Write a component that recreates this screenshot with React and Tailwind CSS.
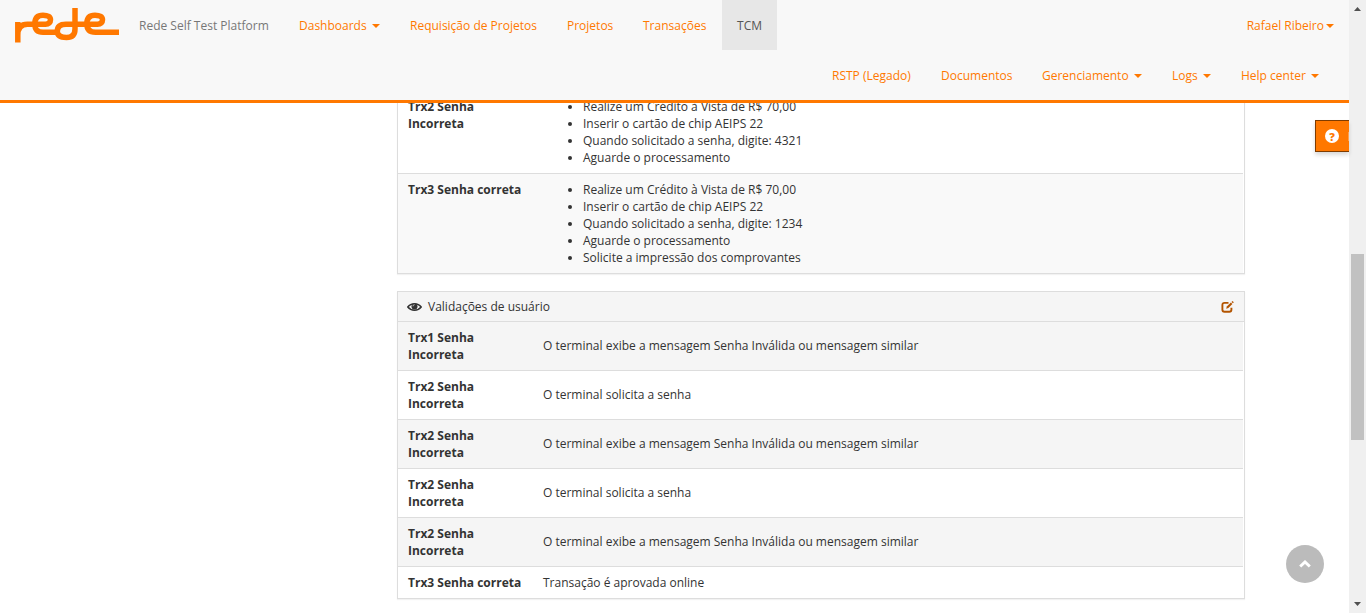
import React from "react";

const NAV_LEFT = [
  { label: "Dashboards", caret: true, width: "w-[111px]" },
  { label: "Requisição de Projetos", width: "w-[157px]" },
  { label: "Projetos", width: "w-[76px]" },
  { label: "Transações", width: "w-[94px]" },
];

const NAV_SECOND = [
  { label: "RSTP (Legado)", width: "w-[109px]" },
  { label: "Documentos", width: "w-[101px]" },
  { label: "Gerenciamento", caret: true, width: "w-[130px]" },
  { label: "Logs", caret: true, width: "w-[69px]" },
  { label: "Help center", caret: true, width: "w-[108px]" },
];

const STEPS = [
  "Realize um Crédito à Vista de R$ 70,00",
  "Inserir o cartão de chip AEIPS 22",
];

const INVALID = "O terminal exibe a mensagem Senha Inválida ou mensagem similar";
const ASK = "O terminal solicita a senha";

const VALIDATIONS = [
  ["Trx1 Senha Incorreta", INVALID],
  ["Trx2 Senha Incorreta", ASK],
  ["Trx2 Senha Incorreta", INVALID],
  ["Trx2 Senha Incorreta", ASK],
  ["Trx2 Senha Incorreta", INVALID],
];

function Caret({ className = "" }) {
  return (
    <svg viewBox="0 0 8 4" className={`inline-block h-1 w-2 shrink-0 ${className}`} fill="currentColor">
      <path d="M0 0H8L4 4Z" />
    </svg>
  );
}

function NavItem({ label, caret, width }) {
  return (
    <a className={`flex h-[50px] shrink-0 items-center whitespace-nowrap pt-px pl-[15px] ${width}`}>
      {label}
      {caret && <Caret className="ml-[5px]" />}
    </a>
  );
}

function Logo() {
  return (
    <svg viewBox="0 0 104 35" className="h-[35px] w-[104px]" fill="none" stroke="#ff7800" strokeWidth="5.5" strokeLinejoin="round">
      <path d="M2.800 34.500V14M2.800 27C2.800 20 6 16.200 12.500 16.200H30.500C33.800 16.200 35.500 14.300 35.500 11.700C35.500 8.800 33 7.200 28 7.200C22.500 7.200 19.800 10 19.800 15.800C19.800 21.800 22.500 24.300 28 24.300H43" />
      <path d="M60 0V21C60 26.800 57 29.500 51.500 29.500C45.500 29.500 42.300 27.500 42.300 23.300C42.300 18.500 45.500 16.200 51 16.200H82.500C85.800 16.200 87.500 14.300 87.500 11.700C87.500 8.800 85 7.200 80 7.200C74.500 7.200 71.800 10 71.800 15.800C71.800 21.800 75 24.300 80.500 24.300H104" />
    </svg>
  );
}

function EyeIcon() {
  return (
    <svg viewBox="0 0 15 10" className="h-[10px] w-[15px]" fill="none" stroke="#333">
      <path d="M.8 5C4 .6 11 .6 14.200 5C11 9.200 4 9.200 .8 5Z" strokeWidth="1.500" />
      <circle cx="7.500" cy="4.600" r="3" fill="#333" stroke="none" />
      <path d="M6 4.300C6 3.300 6.600 2.700 7.500 2.700" stroke="#f5f5f5" strokeWidth=".8" />
    </svg>
  );
}

function EditIcon() {
  return (
    <svg viewBox="0 0 13 12" className="h-3 w-[13px]" fill="none" stroke="#b35400">
      <path d="M7.500 1.900H3.500C2.100 1.900 1.400 2.600 1.400 4V8.700C1.400 10.100 2.100 10.800 3.500 10.800H8.300C9.700 10.800 10.400 10.100 10.400 8.700V6.800" strokeWidth="1.900" />
      <path d="M5.200 7.800L5.800 5.500L9.900 1.500L11.400 3L7.400 7.100Z" fill="#b35400" stroke="none" />
      <path d="M10.500 .9L11.500 0L12.800 1.300L11.900 2.300Z" fill="#b35400" stroke="none" />
    </svg>
  );
}

function StepRow({ title, steps, className }) {
  return (
    <div className={`flex px-[10px] ${className}`}>
      <div className="w-[135px] shrink-0 pr-4 font-bold">{title}</div>
      <ul className="list-disc pl-10">
        {steps.map((s) => (
          <li key={s}>{s}</li>
        ))}
      </ul>
    </div>
  );
}

export default function App() {
  return (
    <div className="relative flex h-[613px] w-[1366px] overflow-hidden bg-white font-['Open_Sans',sans-serif] text-[12px] leading-[17px] text-[#333]">
      <div className="flex w-[1349px] flex-col overflow-hidden">
        <header className="relative z-10 h-[103px] shrink-0 border-b-[3px] border-[#ff7800] bg-[#f8f8f8] text-[#ff7800]">
          <div className="flex h-[50px]">
            <div className="w-[124px] shrink-0 pt-2 pl-[15px]">
              <Logo />
            </div>
            <div className="flex w-[160px] shrink-0 items-center pt-px pl-[15px] whitespace-nowrap text-[#777]">Rede Self Test Platform</div>
            <nav className="flex">
              {NAV_LEFT.map((n) => (
                <NavItem key={n.label} {...n} />
              ))}
              <a className="flex w-[55px] items-center justify-center bg-[#e7e7e7] pt-px text-[#555]">TCM</a>
            </nav>
            <a className="ml-auto flex items-center pt-px pr-[15px]">
              Rafael Ribeiro
              <Caret className="ml-[2px]" />
            </a>
          </div>
          <nav className="flex h-[50px] justify-end pr-[15px]">
            {NAV_SECOND.map((n) => (
              <NavItem key={n.label} {...n} />
            ))}
          </nav>
        </header>

        <main className="-mt-[13px] ml-[397px] w-[848px]">
          <section className="h-[184px] border border-[#ddd] shadow-[0_1px_1px_rgba(0,0,0,0.05)]">
            <StepRow
              className="h-[82px] pt-[7px]"
              title="Trx2 Senha Incorreta"
              steps={[...STEPS, "Quando solicitado a senha, digite: 4321", "Aguarde o processamento"]}
            />
            <StepRow
              className="mr-px h-[100px] border-t border-[#ddd] bg-[#f9f9f9] pt-[7px]"
              title="Trx3 Senha correta"
              steps={[...STEPS, "Quando solicitado a senha, digite: 1234", "Aguarde o processamento", "Solicite a impressão dos comprovantes"]}
            />
          </section>

          <section className="mt-[17px] border border-[#ddd] shadow-[0_1px_1px_rgba(0,0,0,0.05)]">
            <div className="flex h-[30px] items-center border-b border-[#ddd] bg-[#f5f5f5] pr-[10px] pl-[9px]">
              <EyeIcon />
              <span className="ml-[6px]">Validações de usuário</span>
              <span className="ml-auto">
                <EditIcon />
              </span>
            </div>
            {VALIDATIONS.map(([name, text], i) => (
              <div key={i} className="mr-px flex h-[49px] items-center border-b border-[#ddd] px-[10px] odd:bg-white even:bg-[#f5f5f5]">
                <div className="w-[135px] shrink-0 pr-12 font-bold">{name}</div>
                <div className="pb-[2px]">{text}</div>
              </div>
            ))}
            <div className="flex h-[31px] items-center px-[10px]">
              <div className="w-[135px] shrink-0 font-bold">Trx3 Senha correta</div>
              <div>Transação é aprovada online</div>
            </div>
          </section>
        </main>
      </div>

      <aside className="flex w-[17px] shrink-0 flex-col items-center bg-[#f0f0f0] text-[#505050]">
        <svg viewBox="0 0 17 17" className="h-[17px] w-[17px]" fill="currentColor">
          <path d="M5 11H12L8.500 7Z" />
        </svg>
        <div className="mt-[237px] h-[186px] w-[13px] bg-[#c1c1c1]" />
        <svg viewBox="0 0 17 17" className="mt-auto h-[17px] w-[17px]" fill="currentColor">
          <path d="M5 6H12L8.500 10Z" />
        </svg>
      </aside>

      <button className="absolute top-[120px] left-[1315px] flex h-8 w-[34px] items-center overflow-hidden border border-r-0 border-[#7f3c00] bg-[#ff7800] pl-[9px] shadow-[0_3px_4px_rgba(0,0,0,0.15)]">
        <span className="flex size-[14px] shrink-0 items-center justify-center rounded-full bg-white text-[11px] leading-none font-extrabold text-[#ff7800]">?</span>
        <span className="ml-auto h-[9px] w-px bg-[#ffa04d]" />
      </button>

      <button className="absolute top-[545px] left-[1286px] flex size-[38px] items-center justify-center rounded-full bg-[#bbb]">
        <svg viewBox="0 0 12 8" className="h-2 w-3" fill="none" stroke="#fff" strokeWidth="3">
          <path d="M1.200 6.500L6 2L10.800 6.500" />
        </svg>
      </button>
    </div>
  );
}
